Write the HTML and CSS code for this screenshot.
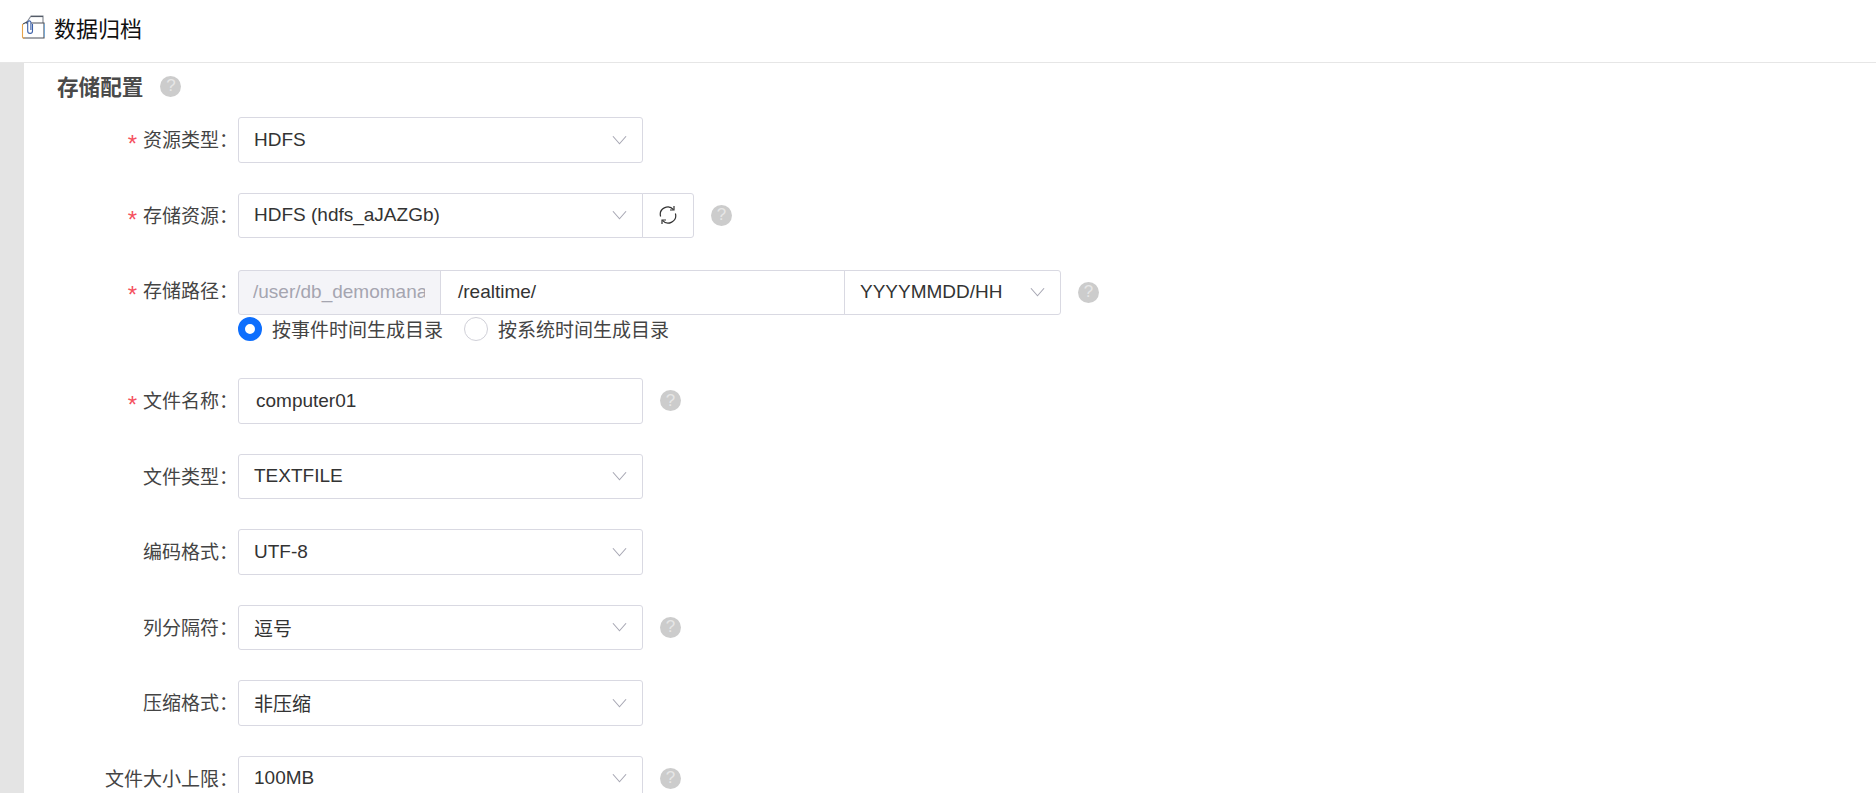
FILE: index.html
```html
<!DOCTYPE html>
<html lang="zh-CN">
<head>
    <meta charset="UTF-8">
    <meta name="viewport" content="width=device-width, initial-scale=1.0">
    <title>数据归档</title>
    <link rel="stylesheet" href="styles.css">
</head>
<body>
    <header class="page-header">
        <svg class="header-icon" viewBox="0 0 24 24" width="24" height="24" fill="none">
            <path d="M6 7 L10 1 H22 V8" stroke="#8a8f98" stroke-width="1.2"/>
            <path d="M10 1.5 H22" stroke="#555c68" stroke-width="1.2"/>
            <path d="M2 9 L6 7 V9 M10 8 H23 V23 H2" stroke="#4a4f59" stroke-width="1.1"/>
            <path d="M1.5 9 V22 a1 1 0 0 0 1 1 H4" stroke="#e8a44c" stroke-width="1.1"/>
            <path d="M23.5 9 V22" stroke="#6aa8e0" stroke-width="0.8"/>
            <path d="M11.5 9 V16 a2.4 2.4 0 0 1 -4.8 0 V7.5 a1.6 1.6 0 0 1 3.2 0 V15" stroke="#3b5fa8" stroke-width="1.1"/>
        </svg>
        <span class="header-title">数据归档</span>
    </header>

    <main class="panel">
        <div class="section-title">
            <h2>存储配置</h2>
            <span class="help">?</span>
        </div>

        <div class="form-row">
            <label class="form-label required">资源类型：</label>
            <div class="select"><span>HDFS</span><svg class="arrow" viewBox="0 0 16 10"><path d="M1 1 L8 9 L15 1"/></svg></div>
        </div>

        <div class="form-row">
            <label class="form-label required">存储资源：</label>
            <div class="select joined"><span>HDFS (hdfs_aJAZGb)</span><svg class="arrow" viewBox="0 0 16 10"><path d="M1 1 L8 9 L15 1"/></svg></div>
            <button class="refresh" type="button">
                <svg viewBox="0 0 20 20" width="20" height="20" fill="none" stroke="#333" stroke-width="1.2">
                    <path d="M2.6 11.5 A7.5 7.5 0 0 1 15.5 4.6"/>
                    <path d="M17.4 8.5 A7.5 7.5 0 0 1 4.5 15.4"/>
                    <path d="M16 1 V5 H12"/>
                    <path d="M4 19 V15 H8"/>
                </svg>
            </button>
            <span class="help">?</span>
        </div>

        <div class="form-row path-row">
            <label class="form-label required">存储路径：</label>
            <div class="path-field">
                <div class="path-group">
                    <div class="path-prefix"><span>/user/db_demomanager/</span></div>
                    <div class="path-input">/realtime/</div>
                    <div class="path-format"><span>YYYYMMDD/HH</span><svg class="arrow" viewBox="0 0 16 10"><path d="M1 1 L8 9 L15 1"/></svg></div>
                    <span class="help">?</span>
                </div>
                <div class="radio-group">
                    <span class="radio checked"></span><span class="radio-text">按事件时间生成目录</span>
                    <span class="radio"></span><span class="radio-text">按系统时间生成目录</span>
                </div>
            </div>
        </div>

        <div class="form-row">
            <label class="form-label required">文件名称：</label>
            <div class="text-input">computer01</div>
            <span class="help">?</span>
        </div>

        <div class="form-row">
            <label class="form-label">文件类型：</label>
            <div class="select"><span>TEXTFILE</span><svg class="arrow" viewBox="0 0 16 10"><path d="M1 1 L8 9 L15 1"/></svg></div>
        </div>

        <div class="form-row">
            <label class="form-label">编码格式：</label>
            <div class="select"><span>UTF-8</span><svg class="arrow" viewBox="0 0 16 10"><path d="M1 1 L8 9 L15 1"/></svg></div>
        </div>

        <div class="form-row">
            <label class="form-label">列分隔符：</label>
            <div class="select"><span>逗号</span><svg class="arrow" viewBox="0 0 16 10"><path d="M1 1 L8 9 L15 1"/></svg></div>
            <span class="help">?</span>
        </div>

        <div class="form-row">
            <label class="form-label">压缩格式：</label>
            <div class="select"><span>非压缩</span><svg class="arrow" viewBox="0 0 16 10"><path d="M1 1 L8 9 L15 1"/></svg></div>
        </div>

        <div class="form-row">
            <label class="form-label">文件大小上限：</label>
            <div class="select"><span>100MB</span><svg class="arrow" viewBox="0 0 16 10"><path d="M1 1 L8 9 L15 1"/></svg></div>
            <span class="help">?</span>
        </div>
    </main>
</body>
</html>
```

FILE: styles.css
```css
html, body {
    height: 100%;
}
body {
    margin: 0;
    overflow: hidden;
    font-family: "Liberation Sans", "Noto Sans CJK SC", sans-serif;
    font-size: 19px;
    color: #333;
    background-color: #e4e4e4;
}
.page-header {
    box-sizing: border-box;
    display: flex;
    align-items: center;
    height: 63px;
    padding: 0 0 8px 21px;
    background-color: #fff;
    border-bottom: 1px solid #e6e6e6;
}
.header-icon {
    margin-right: 9px;
}
.header-title {
    font-size: 22px;
    color: #111;
}
.panel {
    margin-left: 24px;
    padding-left: 33px;
    height: 100%;
    background-color: #fff;
}
.section-title {
    display: flex;
    align-items: center;
    height: 26px;
    padding-top: 10px;
    margin-bottom: 18px;
}
.section-title h2 {
    margin: -2px 17px 0 0;
    font-size: 21.6px;
    font-weight: bold;
    color: #4a4a4a;
}
.section-title .help {
    margin-left: 0;
}
.help {
    display: inline-flex;
    align-items: center;
    justify-content: center;
    flex: none;
    width: 21px;
    height: 21px;
    margin-left: 17px;
    border-radius: 50%;
    background-color: #ccc;
    color: #e6e6e6;
    font-size: 17px;
}
.form-row {
    display: flex;
    align-items: center;
    margin-bottom: 30px;
    height: 45.5px;
}
.form-label {
    width: 181px;
    flex: none;
    padding-bottom: 2px;
    text-align: right;
    white-space: nowrap;
    color: #444;
}
.form-label.required::before {
    content: "*";
    display: inline-block;
    margin-right: 6px;
    font-size: 24px;
    line-height: 12px;
    vertical-align: -5px;
    color: #f5515f;
}
.select, .text-input, .path-input, .path-prefix, .path-format, .refresh {
    box-sizing: border-box;
    height: 45.5px;
    border: 1px solid #d9d9e2;
    background-color: #fff;
}
.select {
    display: flex;
    align-items: center;
    justify-content: space-between;
    width: 405px;
    padding: 0 15px;
    border-radius: 3px;
}
.select.joined {
    border-radius: 3px 0 0 3px;
}
.arrow {
    flex: none;
    width: 15px;
    height: 10px;
    fill: none;
    stroke: #a8a8b4;
    stroke-width: 1.2;
}
.refresh {
    display: flex;
    align-items: center;
    justify-content: center;
    width: 52px;
    margin-left: -1px;
    padding: 0;
    border-radius: 0 3px 3px 0;
}
.text-input {
    display: flex;
    align-items: center;
    width: 405px;
    padding-left: 17px;
    border-radius: 3px;
}
.path-row {
    height: auto;
    align-items: flex-start;
    margin-top: 31.5px;
    margin-bottom: 35px;
}
.path-row .form-label {
    line-height: 45.5px;
    padding-bottom: 0;
    margin-top: -1px;
}
.path-group {
    display: flex;
    align-items: center;
}
.path-prefix {
    display: flex;
    align-items: center;
    width: 203px;
    padding: 0 15px 0 14px;
    background-color: #f4f4f8;
    color: #a5a5b0;
    border-radius: 3px 0 0 3px;
}
.path-prefix span {
    overflow: hidden;
    white-space: nowrap;
}
.path-input {
    display: flex;
    align-items: center;
    width: 405px;
    margin-left: -1px;
    padding-left: 17px;
}
.path-format {
    display: flex;
    align-items: center;
    justify-content: space-between;
    width: 217px;
    margin-left: -1px;
    padding: 0 15px;
    border-radius: 0 3px 3px 0;
}
.radio-group {
    display: flex;
    align-items: center;
    height: 28px;
}
.radio {
    box-sizing: border-box;
    width: 24px;
    height: 24px;
    margin-right: 10px;
    border: 1px solid #d0d0d8;
    border-radius: 50%;
    background-color: #fff;
}
.radio.checked {
    border: 7px solid #0d6efd;
}
.radio-text {
    margin-top: -2px;
    margin-right: 21px;
    color: #444;
}
```
